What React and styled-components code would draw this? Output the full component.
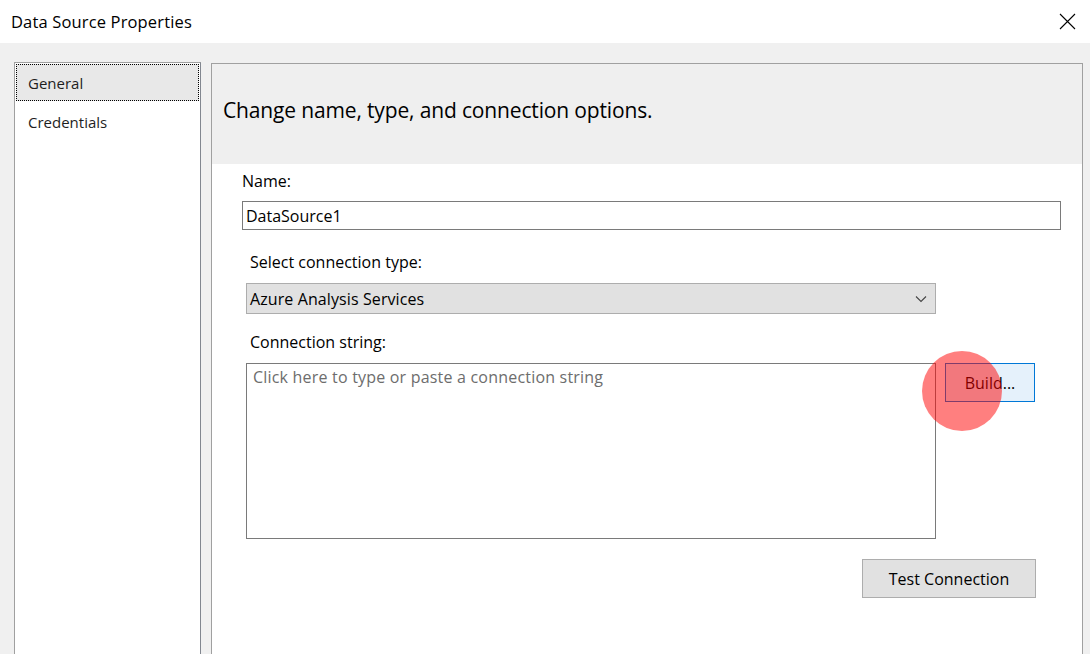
import React from "react";
import styled, { createGlobalStyle } from "styled-components";

const GlobalStyle = createGlobalStyle`
  html, body {
    margin: 0;
    padding: 0;
    background: #f0f0f0;
  }
  * {
    box-sizing: border-box;
  }
`;

const Dialog = styled.div`
  position: relative;
  width: 1090px;
  height: 654px;
  overflow: hidden;
  background: #f0f0f0;
  font-family: "Open Sans", "Noto Sans", sans-serif;
  color: #000;
  display: flex;
  flex-direction: column;
`;

const TitleBar = styled.div`
  height: 43px;
  flex: none;
  background: #fff;
  display: flex;
  align-items: center;
  justify-content: space-between;
  padding: 0 9px 0 11px;

  h1 {
    margin: 0;
    font-size: 16.5px;
    font-weight: 400;
    letter-spacing: 0.15px;
  }
`;

const CloseButton = styled.button`
  width: 28px;
  height: 28px;
  padding: 0;
  border: 0;
  background: transparent;
  display: flex;
  align-items: center;
  justify-content: center;
`;

const Body = styled.div`
  flex: 1;
  display: flex;
  gap: 10px;
  padding: 19px 7px 0 14px;
  min-height: 0;
`;

const Nav = styled.ul`
  width: 187px;
  flex: none;
  margin: 0;
  padding: 1px;
  list-style: none;
  background: #fff;
  border: 1px solid #a0a0a0;
  border-right-color: #828790;
  border-bottom: 0;
`;

const NavItem = styled.li`
  height: 37px;
  display: flex;
  align-items: center;
  padding-left: 11px;
  margin-bottom: 2px;
  font-size: 15px;
  color: #1e1e1e;
  background: ${(p) => (p.$active ? "#e8e8e8" : "transparent")};
  border: 1px dotted ${(p) => (p.$active ? "#000" : "transparent")};
`;

const Panel = styled.section`
  flex: 1;
  margin-top: 1px;
  border: 1px solid #a0a0a0;
  border-bottom: 0;
  background: #fff;
  display: flex;
  flex-direction: column;
`;

const PanelHeader = styled.header`
  height: 100px;
  flex: none;
  background: #efefef;
  display: flex;
  align-items: center;
  padding: 0 11px 8px;

  h2 {
    margin: 0;
    font-size: 21px;
    font-weight: 400;
    letter-spacing: -0.15px;
  }
`;

const Content = styled.div`
  display: flex;
  flex-direction: column;
  padding: 7px 21px 0 30px;
`;

const Label = styled.label`
  font-size: 16px;
  line-height: 20px;
  margin-left: ${(p) => p.$indent || 0}px;
`;

const TextInput = styled.div`
  height: 29px;
  margin-top: 10px;
  border: 1px solid #7a7a7a;
  display: flex;
  align-items: center;
  padding: 0 3px;
  font-size: 16px;
`;

const Select = styled.div`
  width: 690px;
  height: 31px;
  margin: 11px 0 0 4px;
  background: #e1e1e1;
  border: 1px solid #adadad;
  display: flex;
  align-items: center;
  justify-content: space-between;
  padding: 0 8px 0 3px;
  font-size: 16px;
  letter-spacing: 0.1px;
`;

const Group = styled.div`
  margin-top: ${(p) => p.$top}px;
  display: flex;
  flex-direction: column;
`;

const StringRow = styled.div`
  display: flex;
  align-items: flex-start;
  gap: 9px;
  margin: 11px 0 0 4px;
`;

const TextArea = styled.div`
  width: 690px;
  height: 176px;
  border: 1px solid #7a7a7a;
  padding: 2px 6px;
  font-size: 16px;
  letter-spacing: 0.2px;
  color: #6d6d6d;
`;

const Button = styled.button`
  height: 39px;
  width: ${(p) => p.$width}px;
  padding: 0;
  font-family: inherit;
  font-size: 16px;
  color: #000;
  background: ${(p) => (p.$focused ? "#e5f1fb" : "#e1e1e1")};
  border: 1px solid ${(p) => (p.$focused ? "#0078d7" : "#adadad")};
`;

const ButtonRow = styled.div`
  display: flex;
  justify-content: flex-end;
  margin: 20px 25px 0 0;
`;

const ClickMarker = styled.div`
  position: absolute;
  left: 922px;
  top: 351px;
  width: 80px;
  height: 80px;
  border-radius: 50%;
  background: rgba(255, 0, 0, 0.5);
  pointer-events: none;
`;

const Chevron = () => (
  <svg width="12" height="8" viewBox="0 0 12 8">
    <path d="M1 1.5 L6 6.5 L11 1.5" fill="none" stroke="#444" strokeWidth="1.1" />
  </svg>
);

const CloseIcon = () => (
  <svg width="17" height="17" viewBox="0 0 17 17">
    <path d="M1 1 L16 16 M16 1 L1 16" stroke="#000" strokeWidth="1.1" />
  </svg>
);

export default function App() {
  return (
    <Dialog>
      <GlobalStyle />
      <TitleBar>
        <h1>Data Source Properties</h1>
        <CloseButton aria-label="Close">
          <CloseIcon />
        </CloseButton>
      </TitleBar>
      <Body>
        <Nav>
          <NavItem $active>General</NavItem>
          <NavItem>Credentials</NavItem>
        </Nav>
        <Panel>
          <PanelHeader>
            <h2>Change name, type, and connection options.</h2>
          </PanelHeader>
          <Content>
            <Label>Name:</Label>
            <TextInput>DataSource1</TextInput>
            <Group $top={22}>
              <Label $indent={8}>Select connection type:</Label>
              <Select>
                <span>Azure Analysis Services</span>
                <Chevron />
              </Select>
            </Group>
            <Group $top={18}>
              <Label $indent={8}>Connection string:</Label>
              <StringRow>
                <TextArea>Click here to type or paste a connection string</TextArea>
                <Button $width={90} $focused>
                  Build...
                </Button>
              </StringRow>
            </Group>
            <ButtonRow>
              <Button $width={174}>Test Connection</Button>
            </ButtonRow>
          </Content>
        </Panel>
      </Body>
      <ClickMarker />
    </Dialog>
  );
}
